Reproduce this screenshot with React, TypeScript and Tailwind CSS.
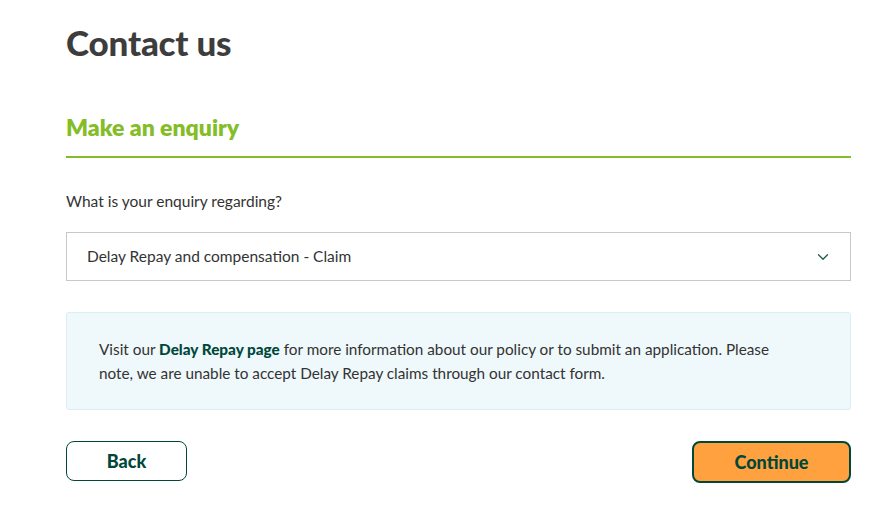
import { ChevronDown } from 'lucide-react';

export default function App() {
  return (
    <div className="min-h-screen bg-white font-['Lato','Noto_Sans',sans-serif] text-[#3c3c3c]">
      <div className="mx-[66px] w-[785px] pt-[20px]">
        <h1 className="text-[35px] font-black leading-[44px] tracking-[-0.2px] text-[#3d3d3d]">
          Contact us
        </h1>

        <h2 className="mt-[48px] pb-[14px] text-[23px] font-extrabold leading-[30px] text-[#84bd27] border-b-2 border-[#84bd27]">
          Make an enquiry
        </h2>

        <label className="mt-[32px] block text-[15.5px] leading-[22px] text-[#333]">
          What is your enquiry regarding?
        </label>

        <div className="mt-[20px] flex h-[49px] items-center justify-between border border-[#c8c8c8] bg-white pl-[20px] pr-[18px]">
          <span className="text-[15.5px] text-[#333]">Delay Repay and compensation - Claim</span>
          <ChevronDown className="h-[18px] w-[18px] text-[#1f5c4e]" strokeWidth={1.75} />
        </div>

        <div className="mt-[31px] rounded-[3px] border border-[#d8eff8] bg-[#eff8fb] px-[32px] py-[24px] text-[15.3px] leading-[24px] text-[#333]">
          Visit our <span className="font-black text-[#00473a]">Delay Repay page</span> for more information about our
          policy or to submit an application. Please
          <br />
          note, we are unable to accept Delay Repay claims through our contact form.
        </div>

        <div className="mt-[31px] flex items-start justify-between">
          <button className="h-[40px] w-[121px] rounded-[8px] border border-[#00473a] bg-white text-[18px] font-black text-[#00473a]">
            Back
          </button>
          <button className="h-[42px] w-[159px] rounded-[8px] border-2 border-[#00473a] bg-[#ffa13f] text-[18px] font-black text-[#00473a]">
            Continue
          </button>
        </div>
      </div>
    </div>
  );
}
